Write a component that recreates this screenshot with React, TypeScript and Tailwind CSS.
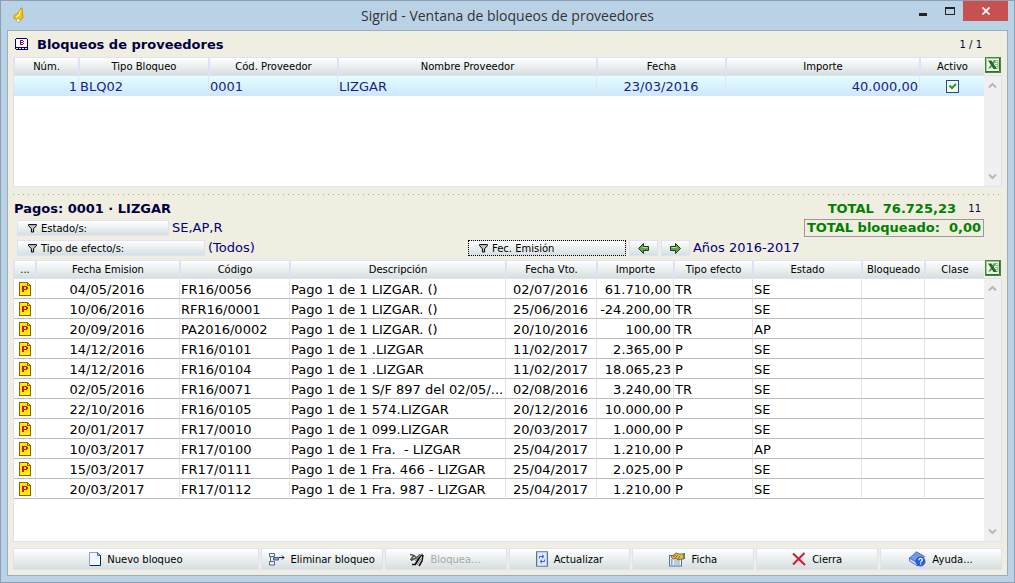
import type { ReactNode } from "react";
import clsx from "clsx";

type Align = "left" | "center" | "right";

interface Column {
  label: string;
  width?: string;
  align?: Align;
}

const blockColumns: Column[] = [
  { label: "Núm.", width: "w-16", align: "right" },
  { label: "Tipo Bloqueo", width: "w-[130px]" },
  { label: "Cód. Proveedor", width: "w-[129px]" },
  { label: "Nombre Proveedor" },
  { label: "Fecha", width: "w-[129px]", align: "center" },
  { label: "Importe", width: "w-[194px]", align: "right" },
  { label: "Activo", width: "w-[65px]", align: "center" },
];

const paymentColumns: Column[] = [
  { label: "...", width: "w-[21px]", align: "center" },
  { label: "Fecha Emision", width: "w-36", align: "center" },
  { label: "Código", width: "w-[110px]" },
  { label: "Descripción" },
  { label: "Fecha Vto.", width: "w-[91px]", align: "center" },
  { label: "Importe", width: "w-[77px]", align: "right" },
  { label: "Tipo efecto", width: "w-[79px]" },
  { label: "Estado", width: "w-[109px]" },
  { label: "Bloqueado", width: "w-[63px]" },
  { label: "Clase", width: "w-[60px]" },
];

const payments = [
  ["04/05/2016", "FR16/0056", "Pago 1 de 1 LIZGAR. ()", "02/07/2016", "61.710,00", "TR", "SE"],
  ["10/06/2016", "RFR16/0001", "Pago 1 de 1 LIZGAR. ()", "25/06/2016", "-24.200,00", "TR", "SE"],
  ["20/09/2016", "PA2016/0002", "Pago 1 de 1 LIZGAR. ()", "20/10/2016", "100,00", "TR", "AP"],
  ["14/12/2016", "FR16/0101", "Pago 1 de 1 .LIZGAR", "11/02/2017", "2.365,00", "P", "SE"],
  ["14/12/2016", "FR16/0104", "Pago 1 de 1 .LIZGAR", "11/02/2017", "18.065,23", "P", "SE"],
  ["02/05/2016", "FR16/0071", "Pago 1 de 1 S/F 897 del 02/05/...", "02/08/2016", "3.240,00", "TR", "SE"],
  ["22/10/2016", "FR16/0105", "Pago 1 de 1 574.LIZGAR", "20/12/2016", "10.000,00", "P", "SE"],
  ["20/01/2017", "FR17/0010", "Pago 1 de 1 099.LIZGAR", "20/03/2017", "1.000,00", "P", "SE"],
  ["10/03/2017", "FR17/0100", "Pago 1 de 1 Fra.  - LIZGAR", "25/04/2017", "1.210,00", "P", "AP"],
  ["15/03/2017", "FR17/0111", "Pago 1 de 1 Fra. 466 - LIZGAR", "25/04/2017", "2.025,00", "P", "SE"],
  ["20/03/2017", "FR17/0112", "Pago 1 de 1 Fra. 987 - LIZGAR", "25/04/2017", "1.210,00", "P", "SE"],
];

const alignClass: Record<Align, string> = {
  left: "text-left",
  center: "text-center",
  right: "text-right",
};

const raised = "border border-[#e0e0f8] bg-linear-to-b from-white to-[#d6dfdf]";

function BellIcon() {
  return (
    <svg width="12" height="17" viewBox="0 0 12 17" aria-hidden="true">
      <path d="M8.200 0.800L9 1L10 11L7 13L1 11.500L1 8.500L5 6Z" fill="#f5c400" stroke="#c09010" strokeWidth="0.8" />
      <path d="M7.500 3.500L6 8L3 10" fill="none" stroke="#fff27a" strokeWidth="1.2" />
      <path d="M3 13L5 11.500L8 14L5 15.500Z" fill="#fff" stroke="#9a9a9a" strokeWidth="0.8" />
    </svg>
  );
}

function FormIcon() {
  return (
    <svg width="14" height="13" viewBox="0 0 14 13" shapeRendering="crispEdges" aria-hidden="true">
      <path d="M1 0h11v1h1v9h-13v-9h1z" fill="#000080" />
      <path d="M1 1h11v8h-11z" fill="#fff" />
      <path d="M5 2h3v1h1v1h-1v1h1v1h-1v1h-3z" fill="#800080" />
      <path d="M6 3h2v1h-2zM6 5h2v1h-2z" fill="#fff" />
      <path d="M0 10h1v1h-1zM3 10h1v1h-1zM6 10h1v1h-1zM9 10h1v1h-1zM12 10h1v1h-1zM1 11h12v1h-12z" fill="#000080" />
    </svg>
  );
}

function ExcelIcon() {
  return (
    <svg width="16" height="16" viewBox="0 0 16 16" aria-hidden="true">
      <rect x="0.500" y="0.500" width="15" height="15" fill="#eef6ec" stroke="#3f8a3c" />
      <path d="M1 14.500h13.500V1" fill="none" stroke="#2d6f2b" />
      <path d="M1.500 14V1.500H14" fill="none" stroke="#9cc898" />
      <path d="M8.500 3.500h4.500v8H8.500z" fill="#fff" stroke="#79ad76" strokeWidth="0.8" />
      <path d="M10 5.500h3M10 7.500h3M10 9.500h3" stroke="#79ad76" strokeWidth="0.8" />
      <path d="M9 3.500h2.500L5.500 11.500H3z" fill="#5da65a" />
      <path d="M3 3.500h3.500l5.500 8.500H8.500z" fill="#226b28" />
    </svg>
  );
}

function PaymentIcon() {
  return (
    <svg className="ml-[5px] block" width="12" height="14" viewBox="0 0 12 14" shapeRendering="crispEdges" aria-hidden="true">
      <path d="M0 0h9v1h1v1h1v1h1v11H0z" fill="#9a5a00" />
      <path d="M1 1h7v3h3v9H1z" fill="#ffee00" />
      <path d="M9 2h1v1h-1z" fill="#ffee00" />
      <path d="M3 4h5v1H3zM3 5h2v5H3zM7 5h2v2H7zM5 7h3v1H5z" fill="#d8101c" />
    </svg>
  );
}

function FunnelIcon() {
  return (
    <svg width="9" height="9" viewBox="0 0 9 9" aria-hidden="true">
      <path d="M0.500 0.600h8v1L5.600 4.800V8H3.400V4.800L0.500 1.600z" fill="#c4c4c4" stroke="#000" />
    </svg>
  );
}

function ArrowIcon({ back = false }: { back?: boolean }) {
  return (
    <svg className={clsx(back && "-scale-x-100")} width="11" height="11" viewBox="0 0 11 11" aria-hidden="true">
      <path d="M0.500 3.500h5v-3l5 5-5 5v-3h-5z" fill="#5da848" stroke="#1f3d1b" />
      <path d="M1.500 4.500h5" stroke="#b4e09c" />
    </svg>
  );
}

function PageIcon() {
  return (
    <svg width="12" height="14" viewBox="0 0 12 14" aria-hidden="true">
      <path d="M0.500 0.500h8l3 3v10h-11z" fill="#f2f7ff" stroke="#8fa3bf" />
      <path d="M11.500 3v10.500H1" fill="none" stroke="#10284c" />
      <path d="M8.500 0.500v3h3z" fill="#b9cbe5" stroke="#33507c" strokeWidth="0.8" />
    </svg>
  );
}

function RemoveRowIcon() {
  return (
    <svg width="16" height="13" viewBox="0 0 16 13" aria-hidden="true">
      <path d="M0.500 0.500h5v3h-5zM0.500 8.500h5v3.500h-5z" fill="#eef4fc" stroke="#55677f" />
      <path d="M1.500 3.500v5" stroke="#55677f" />
      <path d="M4.500 4.500h5v2.500h-5z" fill="#7fa3df" stroke="#3d5f9e" />
      <path d="M10 4.500h5M13 2.500l2 2-2 2" fill="none" stroke="#222" />
    </svg>
  );
}

function BlockIcon() {
  return (
    <svg width="14" height="15" viewBox="0 0 14 15" aria-hidden="true">
      <path d="M0 2.500l4 1 3 3M0.500 8l3-4M1 8.500l6-3 3-3" fill="none" stroke="#555" strokeWidth="1.600" />
      <path d="M12.500 2L10 5 5 13M13 3l-1 6-3 5M2 12.500h3l4-7" fill="none" stroke="#111" strokeWidth="1.500" />
      <path d="M5 9l5-6 3-1M7 13l4-6" fill="none" stroke="#8a8a8a" />
    </svg>
  );
}

function RefreshIcon() {
  return (
    <svg width="12" height="16" viewBox="0 0 12 16" aria-hidden="true">
      <rect x="0.500" y="0.500" width="11" height="15" fill="#b5cdec" stroke="#8694a5" />
      <path d="M0.500 1v14M11.500 1v14" stroke="#65707e" />
      <rect x="2" y="2" width="8" height="12" fill="#dceafc" />
      <path d="M3.500 7.500V5.500h4M6 3.800l2 1.700-2 1.700M8.500 8.500v2h-4M6 8.800L4 10.500l2 1.700" fill="none" stroke="#3764d8" />
    </svg>
  );
}

function CardIcon() {
  return (
    <svg width="16" height="15" viewBox="0 0 16 15" aria-hidden="true">
      <rect x="0.500" y="3.500" width="12" height="10.500" fill="#e9f1fb" stroke="#56708f" />
      <path d="M2 8h1.500M2 10h1.500M2 12h1.500" stroke="#2a55a0" />
      <path d="M5 8h6M5 10h6M5 12h6" stroke="#8fa6c4" />
      <path d="M2 5l5-4 3 1h5v5h-3l-3 1-2-2-3 1z" fill="#e2bd57" stroke="#80611a" strokeWidth="0.900" />
      <path d="M4 5l3-2M6 6l3-3M9 7l2-3" stroke="#6b4f10" strokeWidth="0.800" />
      <path d="M14 1h2v6h-2z" fill="#4c8a72" />
    </svg>
  );
}

function CrossIcon() {
  return (
    <svg width="14" height="14" viewBox="0 0 14 14" aria-hidden="true">
      <path d="M1 1.500L13 13M12.500 1L1 12.500" fill="none" stroke="#d41736" strokeWidth="2" />
    </svg>
  );
}

function HelpIcon() {
  return (
    <svg width="17" height="16" viewBox="0 0 17 16" aria-hidden="true">
      <path d="M0.500 7L7.500 0.800 15.500 5.500 9 12.500z" fill="#6e9bf0" stroke="#3560c8" strokeWidth="0.800" />
      <path d="M0.500 7v3l8 5V12z" fill="#c6d7fa" stroke="#3560c8" strokeWidth="0.800" />
      <circle cx="11.500" cy="10.500" r="4.600" fill="#2b5fe0" stroke="#1a3c9c" strokeWidth="0.600" />
      <path d="M9.800 9.200c0-2.400 3.500-2.200 3.500-.2 0 1.200-1.700 1.200-1.700 2.400M11.600 12.300v1.200" fill="none" stroke="#fff" strokeWidth="1.200" />
    </svg>
  );
}

function Chevron({ down = false }: { down?: boolean }) {
  return (
    <svg className={clsx(down && "rotate-180")} width="9" height="7" viewBox="0 0 9 7" aria-hidden="true">
      <path d="M1 5.500L4.500 2 8 5.500" fill="none" stroke="#b8b8b8" strokeWidth="2" />
    </svg>
  );
}

function TitleBar() {
  return (
    <header className="flex h-[29px] items-start">
      <div className="w-[99px] pt-1.5 pl-1.5">
        <BellIcon />
      </div>
      <h1 className="flex-1 text-center font-['Open_Sans','Noto_Sans',sans-serif] text-[14px] leading-[29px] text-[#333]">
        Sigrid - Ventana de bloqueos de proveedores
      </h1>
      <div className="flex">
        <button aria-label="Minimizar" className="flex h-5 w-[27px] items-center justify-center">
          <svg width="8" height="3" aria-hidden="true" className="mt-1.5">
            <rect width="8" height="3" fill="#222" />
          </svg>
        </button>
        <button aria-label="Maximizar" className="flex h-5 w-[27px] items-center justify-center">
          <svg width="10" height="8" aria-hidden="true" shapeRendering="crispEdges">
            <path d="M0 0h10v8H0zM1 2v5h8V2z" fill="#222" fillRule="evenodd" />
          </svg>
        </button>
        <button aria-label="Cerrar" className="flex h-5 w-[45px] items-center justify-center bg-[#c75050]">
          <svg width="8" height="8" viewBox="0 0 8 8" aria-hidden="true">
            <path d="M0.500 0.500l7 7M7.500 0.500l-7 7" stroke="#fff" strokeWidth="1.800" />
          </svg>
        </button>
      </div>
    </header>
  );
}

function Grid({
  name,
  columns,
  className,
  children,
}: {
  name: string;
  columns: Column[];
  className?: string;
  children: ReactNode;
}) {
  return (
    <div className={clsx("flex", className)}>
      <div className="min-w-0 flex-1 border-b border-l border-[#e0e0f8] bg-white">
        <table aria-label={name} className="w-full table-fixed border-separate border-spacing-0">
          <thead className="text-[10px]">
            <tr>
              {columns.map((col) => (
                <th
                  key={col.label}
                  className={clsx(
                    "h-[19px] border-y border-l-2 border-[#e0e0f8] bg-linear-to-b from-white to-[#d6dfdf] p-0 text-center leading-4 font-normal whitespace-nowrap first:border-l",
                    col.width,
                  )}
                >
                  {col.label}
                </th>
              ))}
            </tr>
          </thead>
          <tbody>{children}</tbody>
        </table>
      </div>
      <div className="flex w-[18px] flex-col">
        <button aria-label="Exportar a Excel" className="flex h-[18px] items-start pl-px">
          <ExcelIcon />
        </button>
        <div className="flex flex-1 flex-col items-center justify-between border-y border-r border-[#e0e0f8] bg-[#f0f0f0] py-1.5">
          <Chevron />
          <Chevron down />
        </div>
      </div>
    </div>
  );
}

function FilterButton({ label, className, focused }: { label: string; className: string; focused?: boolean }) {
  return (
    <button
      className={clsx(
        "flex h-4 items-center gap-1 pl-2.5 text-[10px] text-black",
        raised,
        focused && "outline-1 -outline-offset-1 outline-black outline-dotted",
        className,
      )}
    >
      <FunnelIcon />
      {label}
    </button>
  );
}

function ActionButton({
  icon,
  label,
  disabled,
  className,
}: {
  icon: ReactNode;
  label: string;
  disabled?: boolean;
  className?: string;
}) {
  return (
    <button
      disabled={disabled}
      className={clsx(
        "flex h-[22px] items-center justify-center gap-1.5 text-[10px] whitespace-nowrap text-black disabled:text-[#a8a8a8]",
        raised,
        className,
      )}
    >
      {icon}
      {label}
    </button>
  );
}

function BlockRow() {
  const cells = ["1", "BLQ02", "0001", "LIZGAR", "23/03/2016", "40.000,00"];
  return (
    <tr className="bg-linear-to-b from-[#e2ffff] to-[#cfe6fc] text-[#1c1c8c]">
      {cells.map((cell, i) => (
        <td
          key={i}
          className={clsx(
            "h-5 border-l border-[#e4e4e4] px-px pt-0.5 pb-0 leading-[18px] first:border-l-0",
            alignClass[blockColumns[i].align ?? "left"],
          )}
        >
          {cell}
        </td>
      ))}
      <td className="h-5 border-l border-[#e4e4e4] p-0">
        <label className="relative mx-auto block size-[13px]">
          <input
            type="checkbox"
            defaultChecked
            aria-label="Activo"
            className="peer block size-[13px] appearance-none border border-[#1c5180] bg-[#f4f4f2]"
          />
          <svg className="absolute top-[3px] left-[3px] hidden peer-checked:block" width="8" height="7" viewBox="0 0 8 7" aria-hidden="true">
            <path d="M0.500 2.500L3 5 7 1" fill="none" stroke="#21a121" strokeWidth="2" />
          </svg>
        </label>
      </td>
    </tr>
  );
}

function PaymentRow({ cells }: { cells: string[] }) {
  return (
    <tr>
      <td className="h-5 border-b border-[#bcbcbc] p-0">
        <PaymentIcon />
      </td>
      {paymentColumns.slice(1).map((col, i) => (
        <td
          key={col.label}
          className={clsx(
            "h-5 overflow-hidden border-b border-l border-b-[#bcbcbc] border-l-[#e4e4e4] pt-0.5 pr-0.5 pb-0 pl-px leading-[17px] whitespace-pre",
            alignClass[col.align ?? "left"],
          )}
        >
          {cells[i]}
        </td>
      ))}
    </tr>
  );
}

export default function App() {
  return (
    <div className="flex min-h-screen flex-col border border-[#8c9fb3] bg-[#bad2e6] px-1.5 pb-1.5 font-['DejaVu_Sans',Verdana,sans-serif] text-[13px] text-black">
      <TitleBar />
      <main className="flex flex-1 flex-col border border-[#9aaebf] bg-[#f0eee1] px-[5px] pb-[5px]">
        <div className="flex h-[26px] items-center gap-2 pt-px pl-0.5 text-[#000040]">
          <FormIcon />
          <h2 className="flex-1 font-bold">Bloqueos de proveedores</h2>
          <span className="pr-5 text-[10px]">1 / 1</span>
        </div>

        <Grid name="Bloqueos de proveedores" columns={blockColumns} className="min-h-[130px]">
          <BlockRow />
        </Grid>

        <div className="mt-[5px] mb-[3px] h-[3px] bg-[linear-gradient(90deg,#aaa69a_1px,transparent_1px)] bg-[length:5px_1px] bg-bottom-left bg-repeat-x" />

        <section className="pb-0.5 text-[#00007c]">
          <div className="flex h-5 items-center pt-px pr-[21px]">
            <h2 className="flex-1 pl-px font-bold text-[#000040]">Pagos: 0001 · LIZGAR</h2>
            <span className="font-bold whitespace-pre text-[#008000]">TOTAL  76.725,23</span>
            <span className="w-[25px] text-right text-[10px] text-[#000040]">11</span>
          </div>
          <div className="flex h-5 items-center gap-[3px] pr-[18px] pl-1">
            <FilterButton label="Estado/s:" className="w-[152px]" />
            <span className="flex-1">SE,AP,R</span>
            <span className="border border-[#999] px-0.5 leading-4 font-bold whitespace-pre text-[#008000]">
              TOTAL bloqueado:  0,00
            </span>
          </div>
          <div className="flex h-5 items-center">
            <div className="flex w-[46%] items-center gap-[3px] pl-1">
              <FilterButton label="Tipo de efecto/s:" className="w-[188px]" />
              <span>(Todos)</span>
            </div>
            <div className="flex items-center gap-[3px]">
              <FilterButton label="Fec. Emisión" className="w-[158px]" focused />
              <button aria-label="Anterior" className={clsx("flex h-4 w-[29px] items-center justify-center", raised)}>
                <ArrowIcon back />
              </button>
              <button aria-label="Siguiente" className={clsx("flex h-4 w-[29px] items-center justify-center", raised)}>
                <ArrowIcon />
              </button>
              <span>Años 2016-2017</span>
            </div>
          </div>
        </section>

        <Grid name="Pagos" columns={paymentColumns} className="flex-1">
          {payments.map((cells) => (
            <PaymentRow key={cells[1]} cells={cells} />
          ))}
        </Grid>

        <footer className="mt-1.5 grid grid-cols-8 gap-0.5">
          <ActionButton icon={<PageIcon />} label="Nuevo bloqueo" className="col-span-2" />
          <ActionButton icon={<RemoveRowIcon />} label="Eliminar bloqueo" />
          <ActionButton icon={<BlockIcon />} label="Bloquea..." disabled />
          <ActionButton icon={<RefreshIcon />} label="Actualizar" />
          <ActionButton icon={<CardIcon />} label="Ficha" />
          <ActionButton icon={<CrossIcon />} label="Cierra" />
          <ActionButton icon={<HelpIcon />} label="Ayuda..." />
        </footer>
      </main>
    </div>
  );
}
